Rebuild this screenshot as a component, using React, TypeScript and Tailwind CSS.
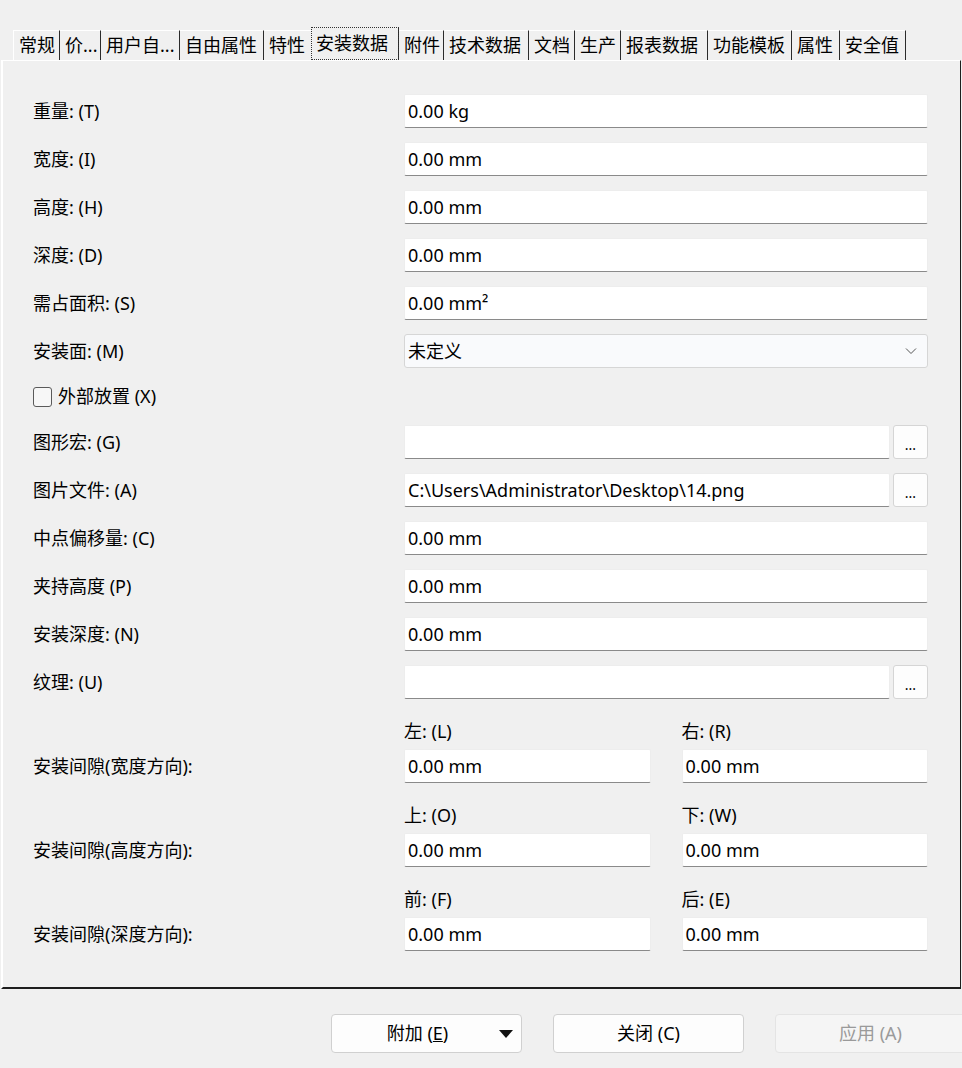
import React from "react";

const tabs = [
  { label: "常规", w: "w-[47px]" },
  { label: "价...", w: "w-[41px]" },
  { label: "用户自...", w: "w-[79px]" },
  { label: "自由属性", w: "w-[84px]" },
  { label: "特性", w: "w-[47px]", noLine: true },
  { label: "安装数据", w: "w-[88px]", active: true },
  { label: "附件", w: "w-[45px]" },
  { label: "技术数据", w: "w-[85px]" },
  { label: "文档", w: "w-[46px]" },
  { label: "生产", w: "w-[46px]" },
  { label: "报表数据", w: "w-[87px]" },
  { label: "功能模板", w: "w-[84px]" },
  { label: "属性", w: "w-[48px]" },
  { label: "安全值", w: "w-[66px]" },
];

const fields = [
  { label: "重量: (T)", value: "0.00 kg" },
  { label: "宽度: (I)", value: "0.00 mm" },
  { label: "高度: (H)", value: "0.00 mm" },
  { label: "深度: (D)", value: "0.00 mm" },
  { label: "需占面积: (S)", value: "0.00 mm²" },
];

const lowerFields = [
  { label: "图形宏: (G)", value: "", browse: true },
  { label: "图片文件: (A)", value: "C:\\Users\\Administrator\\Desktop\\14.png", browse: true },
  { label: "中点偏移量: (C)", value: "0.00 mm" },
  { label: "夹持高度 (P)", value: "0.00 mm" },
  { label: "安装深度: (N)", value: "0.00 mm" },
  { label: "纹理: (U)", value: "", browse: true },
];

const gaps = [
  { label: "安装间隙(宽度方向):", a: "左: (L)", b: "右: (R)" },
  { label: "安装间隙(高度方向):", a: "上: (O)", b: "下: (W)" },
  { label: "安装间隙(深度方向):", a: "前: (F)", b: "后: (E)" },
];

function TextBox({ value, className = "" }: { value: string; className?: string }) {
  return (
    <div
      className={`h-[34px] bg-white border border-[#ededed] border-b-[#8a8a8a] rounded-[2px] pl-[3px] flex items-center text-[18px] text-black whitespace-nowrap overflow-hidden ${className}`}
    >
      {value}
    </div>
  );
}

function BrowseButton() {
  return (
    <div className="w-[35px] h-[34px] shrink-0 bg-[#fdfdfd] border border-[#d5d5d5] rounded-[3px] flex items-end justify-center pb-[6px] text-[14px] leading-none text-black">
      ...
    </div>
  );
}

export default function App() {
  return (
    <div
      className="w-[962px] h-[1068px] bg-[#f0f0f0] overflow-hidden text-black"
      style={{ fontFamily: '"Noto Sans", "Noto Sans CJK SC", sans-serif' }}
    >
      {/* tab strip */}
      <div className="h-[60px] flex items-end pl-[13px]">
        {tabs.map((t) => (
          <div
            key={t.label}
            className={`${t.w} shrink-0 flex items-center pl-[5px] text-[18px] whitespace-nowrap ${
              t.active
                ? "h-[33px] border-r border-[#2b2b2b] outline-1 outline-dotted outline-[#333] -outline-offset-1"
                : t.noLine
                ? "h-[30px] border-t border-white"
                : "h-[30px] border-t border-white border-r border-r-[#2b2b2b]"
            } ${t.label === "常规" ? "border-l border-l-white" : ""}`}
          >
            {t.label}
          </div>
        ))}
      </div>

      {/* panel */}
      <div className="ml-[1px] w-[960px] h-[929px] border-l-2 border-t border-white border-r border-b-2 border-r-[#1e1e1e] border-b-[#1e1e1e] pt-[33px] pl-[30px] pr-[32px] text-[18px]">
        <div className="flex flex-col gap-[14px]">
          {fields.map((f) => (
            <div key={f.label} className="flex items-center">
              <div className="w-[371px] shrink-0">{f.label}</div>
              <TextBox value={f.value} className="flex-1" />
            </div>
          ))}

          <div className="flex items-center">
            <div className="w-[371px] shrink-0">安装面: (M)</div>
            <div className="flex-1 h-[34px] bg-[#f9fafc] border border-[#d6d6d6] rounded-[3px] pl-[3px] pr-[10px] flex items-center justify-between">
              <span>未定义</span>
              <svg width="12" height="8" viewBox="0 0 12 8" fill="none">
                <path d="M1 1.5 L6 6.5 L11 1.5" stroke="#555" strokeWidth="1" />
              </svg>
            </div>
          </div>

          <div className="h-[29px] flex items-center gap-[6px]">
            <div className="w-[19px] h-[20px] border border-[#5a5a5a] rounded-[3px] bg-[#f7f7f7]" />
            <span>外部放置 (X)</span>
          </div>

          {lowerFields.map((f) => (
            <div key={f.label} className="flex items-center">
              <div className="w-[371px] shrink-0">{f.label}</div>
              <div className="flex-1 flex items-center gap-[3px]">
                <TextBox value={f.value} className="flex-1" />
                {f.browse && <BrowseButton />}
              </div>
            </div>
          ))}

          {gaps.map((g) => (
            <div key={g.label} className="flex items-end">
              <div className="w-[371px] shrink-0 h-[34px] flex items-center">{g.label}</div>
              <div className="flex-1 grid grid-cols-2 gap-x-[31px]">
                <div className="flex flex-col">
                  <div className="h-[36px] flex items-center">{g.a}</div>
                  <TextBox value="0.00 mm" />
                </div>
                <div className="flex flex-col">
                  <div className="h-[36px] flex items-center">{g.b}</div>
                  <TextBox value="0.00 mm" />
                </div>
              </div>
            </div>
          ))}
        </div>
      </div>

      {/* buttons */}
      <div className="flex pl-[331px] pt-[25px] gap-[31px] text-[18px]">
        <div className="w-[191px] h-[39px] shrink-0 bg-[#fdfdfd] border border-[#d0d0d0] rounded-[4px] flex items-center relative">
          <span className="w-full text-center pr-[18px]">
            附加 (<span className="underline">E</span>)
          </span>
          <svg className="absolute right-[8px] top-[15px]" width="14" height="8" viewBox="0 0 14 8">
            <path d="M0 0 H14 L7 8 Z" fill="#111" />
          </svg>
        </div>
        <div className="w-[191px] h-[39px] shrink-0 bg-[#fdfdfd] border border-[#d0d0d0] rounded-[4px] flex items-center justify-center">
          关闭 (C)
        </div>
        <div className="w-[191px] h-[39px] shrink-0 bg-[#f5f5f5] border border-[#e4e4e4] rounded-[4px] flex items-center justify-center text-[#9a9a9a]">
          应用 (A)
        </div>
      </div>
    </div>
  );
}
